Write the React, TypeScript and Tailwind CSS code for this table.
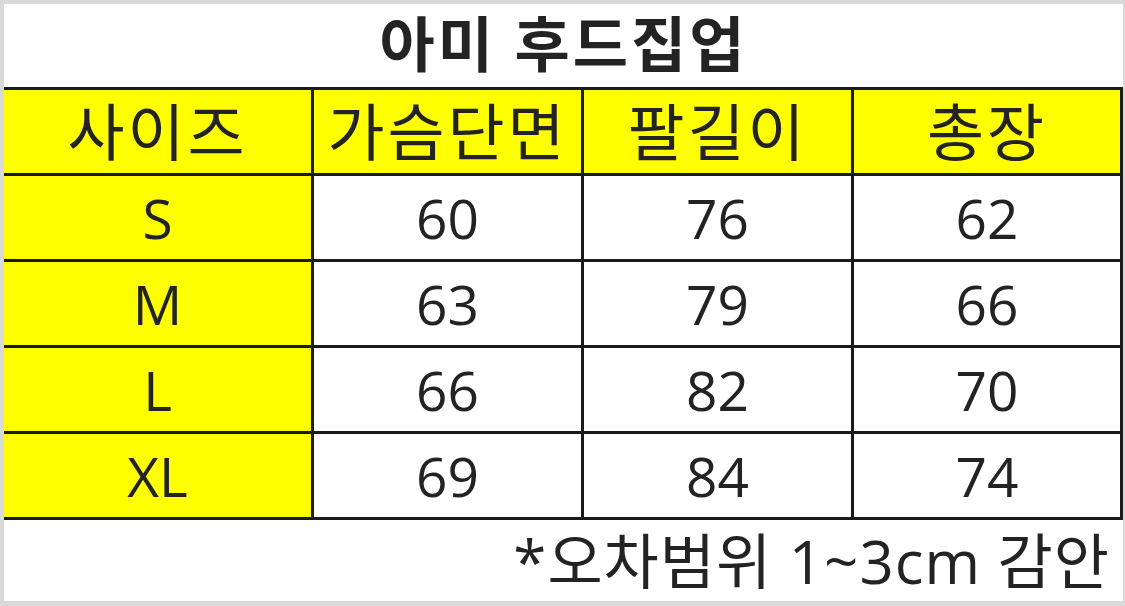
import React from "react";

const font = { fontFamily: '"Open Sans", "Noto Sans CJK KR", sans-serif' };

const rows = [
  ["S", "60", "76", "62"],
  ["M", "63", "79", "66"],
  ["L", "66", "82", "70"],
  ["XL", "69", "84", "74"],
];

const header = ["사이즈", "가슴단면", "팔길이", "총장"];

export default function App() {
  return (
    <div
      className="w-[1125px] h-[606px] bg-[#d9d9d9] pt-[4px] pl-[4px] pr-[2px] pb-[5px]"
      style={font}
    >
      <div className="w-full h-full bg-white flex flex-col text-[#232323]">
        <div className="h-[83px] flex items-center justify-center text-[60px] font-bold leading-none tracking-[3px] pb-[4px]">
          아미 후드집업
        </div>
        <div className="grid grid-cols-[310px_270px_270px_269px] border-t-[3px] border-[#1a1a1a]">
          {header.map((h) => (
            <div
              key={h}
              className="h-[86px] bg-[#ffff00] border-b-[3px] border-r-[3px] border-[#1a1a1a] flex items-center justify-center text-[62px] leading-none tracking-[3px]"
            >
              {h}
            </div>
          ))}
          {rows.map((r) =>
            r.map((c, j) => (
              <div
                key={r[0] + j}
                className={`h-[86px] border-b-[3px] border-r-[3px] border-[#1a1a1a] flex items-center justify-center text-[55px] leading-none ${j === 0 ? "bg-[#ffff00]" : "bg-white"}`}
              >
                {c}
              </div>
            ))
          )}
        </div>
        <div className="flex-1 flex items-center justify-end pr-[13px] text-[60px] leading-none tracking-[1px]">
          *오차범위 1~3cm 감안
        </div>
      </div>
    </div>
  );
}
